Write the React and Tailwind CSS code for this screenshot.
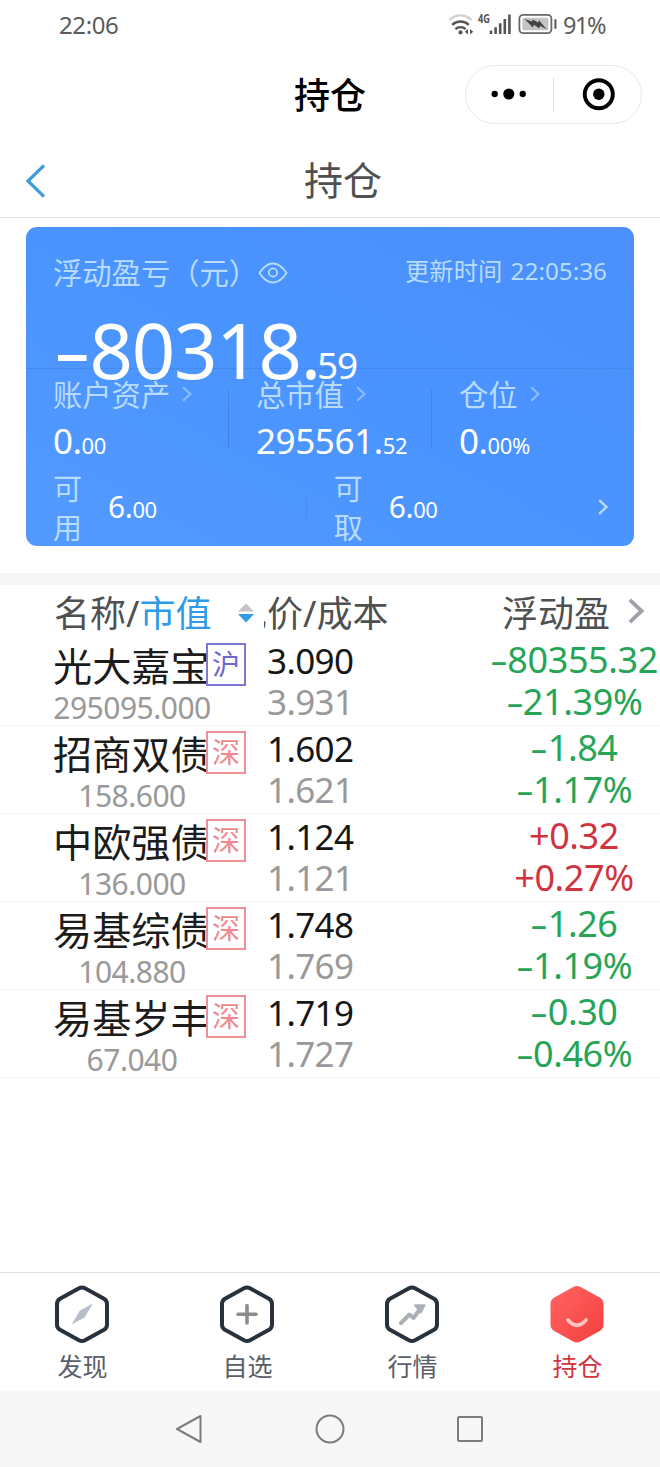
import clsx from "clsx";

const positions = [
  { name: "光大嘉宝", market: "沪", value: "295095.000", price: "3.090", cost: "3.931", profit: "-80355.32", rate: "-21.39%" },
  { name: "招商双债", market: "深", value: "158.600", price: "1.602", cost: "1.621", profit: "-1.84", rate: "-1.17%" },
  { name: "中欧强债", market: "深", value: "136.000", price: "1.124", cost: "1.121", profit: "+0.32", rate: "+0.27%" },
  { name: "易基综债", market: "深", value: "104.880", price: "1.748", cost: "1.769", profit: "-1.26", rate: "-1.19%" },
  { name: "易基岁丰", market: "深", value: "67.040", price: "1.719", cost: "1.727", profit: "-0.30", rate: "-0.46%" },
];

const HEXAGON = "M25 3.2 Q28 1.6 31 3.2 L50 13.8 Q53 15.6 53 19 V39.5 Q53 43 50 44.8 L31 55.3 Q28 56.9 25 55.3 L6 44.8 Q3 43 3 39.5 V19 Q3 15.6 6 13.8 Z";

// Splits the leading minus off so it can be drawn wider than the font's hyphen
const Signed = ({ text }) => {
  if (!text.startsWith("-")) return text;
  return (
    <>
      <span className="inline-block w-[0.48em] scale-x-[1.55] text-center">-</span>
      {text.slice(1)}
    </>
  );
};

const Chevron = ({ className, width = 2 }) => (
  <svg viewBox="0 0 10 16" fill="none" stroke="currentColor" strokeWidth={width} className={className}>
    <path d="M1.2 1.2 L8.4 8 L1.2 14.8" />
  </svg>
);

const StatusBar = () => (
  <div className="flex h-[50px] items-center pl-[59px] pr-[55px] text-[24px] leading-[50px] text-[#5c5c5c]">
    <span className="tracking-[-0.4px]">22:06</span>
    <div className="ml-auto flex items-center">
      <svg viewBox="0 0 66 26" className="mb-[2px] h-[26px] w-[66px]" fill="none">
        <path d="M1.5 9 A15.5 15.5 0 0 1 23.5 9" stroke="#cfcfcf" strokeWidth="2.4" />
        <path d="M4.2 13.8 A12 12 0 0 1 20.8 13.8" stroke="#555" strokeWidth="2.4" />
        <path d="M7.4 18.2 A7.4 7.4 0 0 1 17.6 18.2" stroke="#555" strokeWidth="2.4" />
        <circle cx="12.5" cy="21.4" r="2.1" fill="#555" />
        <path d="M16.8 20.8 L20 18 V23.6 Z M25.2 20.8 L22 18 V23.6 Z" fill="#555" />
        <text x="30" y="12" fontSize="12" fontWeight="700" fill="#555" textLength="12" lengthAdjust="spacingAndGlyphs">4G</text>
        <path d="M43 19.6 V23 M47.6 16.2 V23 M52.2 12.2 V23 M56.8 8 V23 M61.4 3.4 V23" stroke="#555" strokeWidth="2.6" />
      </svg>
      <svg viewBox="0 0 40 22" className="mb-[2px] ml-[4px] h-[22px] w-[40px]" fill="none">
        <rect x="1.4" y="1.8" width="32" height="18.4" rx="4" stroke="#666" strokeWidth="1.8" />
        <rect x="4.4" y="4.8" width="26" height="12.4" rx="1.5" fill="#c4c4c4" />
        <path d="M6.6 6 L14 8.6 L14.8 6.4 L20 9.6 L21 7.2 L28.6 16.2 L21.8 12.8 L21.4 15.6 L16 11.8 L14.8 14.6 Z" fill="#444" />
        <path d="M37.4 6.2 V15.8" stroke="#555" strokeWidth="2" />
      </svg>
      <span className="ml-[5px] w-[42px] whitespace-nowrap text-[23.5px] tracking-[-1.4px]">91%</span>
    </div>
  </div>
);

const AppHeader = () => (
  <div className="grid h-[92px] grid-cols-3 items-center">
    <h1 className="col-start-2 text-center text-[36px] font-medium text-black">持仓</h1>
    <div className="mb-[4px] ml-[25px] flex h-[59px] w-[177px] items-center rounded-full border border-[#e8e8e8]">
      <svg viewBox="0 0 88 58" className="h-[58px] w-[88px]">
        <circle cx="29" cy="29" r="3.2" />
        <circle cx="43.3" cy="29" r="5.6" />
        <circle cx="57.4" cy="29" r="3.2" />
      </svg>
      <span className="h-[35px] w-px bg-[#dedede]" />
      <svg viewBox="0 0 88 58" className="h-[58px] w-[88px]">
        <circle cx="45.3" cy="29.3" r="14.2" fill="none" stroke="#000" strokeWidth="4" />
        <circle cx="45.3" cy="29.3" r="5.8" />
      </svg>
    </div>
  </div>
);

const PageNav = () => (
  <div className="grid h-[76px] grid-cols-3 items-center border-b border-[#e2e2e2]">
    <svg viewBox="0 0 20 34" className="ml-[25px] mt-[2px] h-[34px] w-[20px]" fill="none" stroke="#3f9bdc" strokeWidth="3.2">
      <path d="M19 1.5 L3 17 L19 32.5" />
    </svg>
    <h2 className="ml-[26px] mt-[2px] text-center text-[39px] text-[#505050]">持仓</h2>
  </div>
);

const Stat = ({ label, whole, fraction }) => (
  <div className="ml-[27px] w-[175px]">
    <div className="flex h-[40px] items-center whitespace-nowrap text-[29.3px] leading-[40px] text-[#b8dbff]">
      {label}
      <Chevron className="mb-[2px] ml-[12px] h-[16px] w-[10px] opacity-60" />
    </div>
    <div className="mt-[7px] whitespace-nowrap text-[35px] leading-[37px] tracking-[-0.4px]">
      {whole}
      <span className="text-[22px]">{fraction}</span>
    </div>
  </div>
);

const Cash = ({ label }) => (
  <div className="flex items-center">
    <span className="w-[29px] text-[29px] leading-[39px] text-[#b8dbff]">{label}</span>
    <span className="ml-[26px] text-[30px] leading-[39px] tracking-[-0.4px]">
      6.<span className="text-[22px]">00</span>
    </span>
  </div>
);

const AssetCard = () => (
  <section className="mx-[26px] mt-[9px] h-[319px] overflow-hidden rounded-[11px] bg-linear-to-tr from-[#539aff] via-[#4a94ff] to-[#4b8ffa] text-white">
    <div className="h-[142px] border-b border-[#4389f0] px-[27px] pt-[27px]">
      <div className="flex h-[40px] items-center text-[#b8dbff]">
        <span className="text-[29.3px]">浮动盈亏（元）</span>
        <svg viewBox="0 0 30 22" className="mb-[2px] h-[22px] w-[30px]" fill="none" stroke="currentColor" strokeWidth="1.8">
          <path d="M1.5 11 C6 4 10 1.5 15 1.5 C20 1.5 24 4 28.5 11 C24 18 20 20.5 15 20.5 C10 20.5 6 18 1.5 11 Z" />
          <circle cx="15" cy="10.5" r="4.2" />
        </svg>
        <span className="-mt-[6px] ml-auto text-[24.3px] [word-spacing:2px]">更新时间 22:05:36</span>
      </div>
      <div className="mt-[17px] whitespace-nowrap text-[76px] leading-[78px] tracking-[-1.2px]">
        <Signed text="-80318." />
        <span className="-ml-[3px] text-[37px]">59</span>
      </div>
    </div>
    <div className="flex h-[100px] pt-[6px]">
      <Stat label="账户资产" whole="0." fraction="00" />
      <span className="mt-[15px] h-[58px] w-px bg-[#3f83e6]" />
      <Stat label="总市值" whole="295561." fraction="52" />
      <span className="mt-[15px] h-[58px] w-px bg-[#3f83e6]" />
      <Stat label="仓位" whole="0." fraction="00%" />
    </div>
    <div className="flex h-[77px] items-center pl-[27px] pr-[26px]">
      <Cash label="可用" />
      <span className="ml-[149px] mr-[27px] h-[20px] w-px bg-[#468df3]" />
      <Cash label="可取" />
      <Chevron className="mb-[2px] ml-auto h-[16px] w-[10px] text-[#b8dbff]" width={2.4} />
    </div>
  </section>
);

const TableHeader = () => (
  <div className="flex h-[53px] items-center whitespace-nowrap pl-[54px] pt-[4px] text-[36px] leading-[48px] text-[#505050]">
    <div className="w-[184px]">
      名称/<span className="text-[#2f9be6]">市值</span>
    </div>
    <svg viewBox="0 0 16 20" className="mb-[2px] h-[20px] w-[16px]">
      <path d="M0 8.4 L8 0.4 L16 8.4 Z" fill="#c4c4c8" />
      <path d="M0 11 H16 L8 19.4 Z" fill="#2f9be6" />
    </svg>
    <div className="ml-[10px] w-[130px] overflow-hidden">
      <span className="-ml-[33px]">现价/成本</span>
    </div>
    <div className="ml-[108px]">浮动盈</div>
    <Chevron className="mb-[6px] ml-[17px] h-[26px] w-[18px] text-[#9fa3ab]" width={2.4} />
  </div>
);

const PositionRow = ({ item }) => {
  const gain = item.profit.startsWith("+");
  return (
    <div className="flex h-[88px] whitespace-nowrap border-b border-[#f3f3f3] pl-[53px]">
      <div className="w-[214px]">
        <div className="flex h-[55px] items-center">
          <span className="w-[153px] overflow-visible text-[39.2px] leading-[55px] text-[#1c1c1c]">{item.name}</span>
          <span
            className={clsx(
              "z-10 -mt-[3px] h-[43px] w-[40px] border-2 text-center text-[28px] leading-[39px]",
              item.market === "沪" ? "border-[#7d78d2] text-[#6b66d0]" : "border-[#ef8f98] text-[#f2848c]"
            )}
          >
            {item.market}
          </span>
        </div>
        <div className="w-[158px] text-center text-[30px] leading-[29px] tracking-[-0.5px] text-[#999]">{item.value}</div>
      </div>
      <div className="w-[223px] pt-[2px] text-[35px] leading-[41px] tracking-[-0.6px]">
        <div className="text-[#161616]">{item.price}</div>
        <div className="text-[#999]">{item.cost}</div>
      </div>
      <div
        className={clsx(
          "w-[168px] pt-[1px] text-center text-[36px] leading-[42px] tracking-[-0.4px]",
          gain ? "text-[#d0353f]" : "text-[#27a557]"
        )}
      >
        <div><Signed text={item.profit} /></div>
        <div><Signed text={item.rate} /></div>
      </div>
    </div>
  );
};

const Tab = ({ label, active, children }) => (
  <div className="flex flex-1 flex-col items-center pt-[12px]">
    <svg viewBox="0 0 56 59" className="mr-[1px] h-[59px] w-[56px]" fill="none" strokeLinecap="round" strokeLinejoin="round">
      {children}
    </svg>
    <span className={clsx("mt-[3px] text-[25px] leading-[38px]", active ? "text-[#d0353f]" : "text-[#5a5e68]")}>{label}</span>
  </div>
);

const TabBar = () => (
  <nav className="mt-auto flex h-[119px] border-t border-[#dedede]">
    <Tab label="发现">
      <path d={HEXAGON} stroke="#27323d" strokeWidth="4" />
      <path d="M39 18.5 L30.5 32.5 L17.5 39.5 L26 25.5 Z" fill="#b9bdcb" />
    </Tab>
    <Tab label="自选">
      <path d={HEXAGON} stroke="#27323d" strokeWidth="4" />
      <path d="M28 20.5 V38 M19 29.3 H37" stroke="#8c8c8c" strokeWidth="3.6" />
    </Tab>
    <Tab label="行情">
      <path d={HEXAGON} stroke="#27323d" strokeWidth="4" />
      <path d="M17 38 L25.5 29.5 L29.5 33 L37.5 22" stroke="#acaeb8" strokeWidth="4" />
      <path d="M31 20.2 H40.5 L36.8 27.5 Z" fill="#acaeb8" stroke="#acaeb8" strokeWidth="2" />
    </Tab>
    <Tab label="持仓" active>
      <defs>
        <linearGradient id="hold" x1="0" y1="0" x2="1" y2="1">
          <stop offset="0" stopColor="#ff6462" />
          <stop offset="1" stopColor="#f4403f" />
        </linearGradient>
      </defs>
      <path d={HEXAGON} fill="url(#hold)" stroke="url(#hold)" strokeWidth="3" />
      <path d="M19 35 Q28 45.5 37 35" stroke="#ffc4c2" strokeWidth="3.8" />
    </Tab>
  </nav>
);

const SystemNav = () => (
  <div className="flex h-[76px] items-center justify-center gap-[110px] bg-[#f7f7f7]">
    <svg viewBox="0 0 30 30" className="h-[30px] w-[30px]" fill="none" stroke="#7c7c7c" strokeWidth="2" strokeLinejoin="round">
      <path d="M25.5 2 V28 L2 15 Z" />
    </svg>
    <svg viewBox="0 0 30 30" className="h-[30px] w-[30px]" fill="none" stroke="#7c7c7c" strokeWidth="2">
      <circle cx="15" cy="15" r="13.5" />
    </svg>
    <svg viewBox="0 0 30 30" className="h-[30px] w-[30px]" fill="none" stroke="#7c7c7c" strokeWidth="2">
      <rect x="3" y="3" width="24" height="24" rx="1" />
    </svg>
  </div>
);

export default function App() {
  return (
    <div className="flex h-[1467px] w-[660px] flex-col overflow-hidden bg-white font-['Noto_Sans','Noto_Sans_CJK_SC',sans-serif]">
      <StatusBar />
      <AppHeader />
      <PageNav />
      <AssetCard />
      <div className="mt-[27px] h-[12px] bg-[#f6f6f6]" />
      <TableHeader />
      {positions.map((item) => (
        <PositionRow key={item.name} item={item} />
      ))}
      <TabBar />
      <SystemNav />
    </div>
  );
}
